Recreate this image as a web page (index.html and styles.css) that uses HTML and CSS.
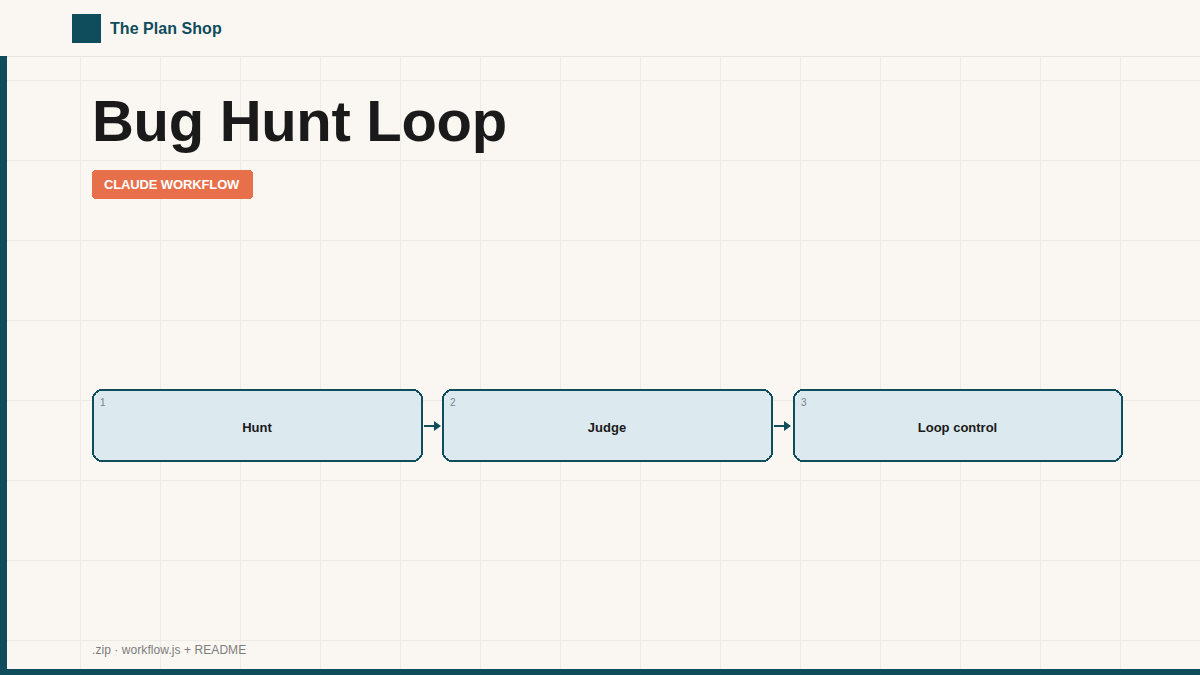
FILE: index.html
```html
<!DOCTYPE html>
<html lang="en">
<head>
<meta charset="utf-8">
<title>Bug Hunt Loop</title>
<link rel="stylesheet" href="styles.css">
</head>
<body>
<div class="slide">
  <header class="topbar">
    <div class="logo"></div>
    <div class="brand">The Plan Shop</div>
  </header>
  <div class="stage">
    <div class="rail"></div>
    <main class="content">
      <h1 class="title">Bug Hunt Loop</h1>
      <div class="tag"><svg class="shape"><rect/></svg><span class="tag-text">CLAUDE WORKFLOW</span></div>
      <div class="flow">
        <div class="step"><svg class="shape"><rect/></svg><span class="num">1</span><span class="name">Hunt</span></div>
        <svg class="arrow" width="20" height="12" viewBox="0 0 20 12"><path d="M1 6H12" stroke="#0f4c5c" stroke-width="2" fill="none"/><path d="M11 1L18 6L11 11Z" fill="#0f4c5c"/></svg>
        <div class="step"><svg class="shape"><rect/></svg><span class="num">2</span><span class="name">Judge</span></div>
        <svg class="arrow" width="20" height="12" viewBox="0 0 20 12"><path d="M1 6H12" stroke="#0f4c5c" stroke-width="2" fill="none"/><path d="M11 1L18 6L11 11Z" fill="#0f4c5c"/></svg>
        <div class="step"><svg class="shape"><rect/></svg><span class="num">3</span><span class="name">Loop control</span></div>
      </div>
      <div class="foot">.zip · workflow.js + README</div>
    </main>
  </div>
</div>
</body>
</html>
```
FILE: styles.css
```css
* { box-sizing: border-box; }
html, body { margin: 0; height: 100%; }
body {
  font-family: "Liberation Sans", Arial, sans-serif;
  background-color: #faf7f2;
}
.slide {
  width: 1200px;
  height: 675px;
  display: flex;
  flex-direction: column;
  overflow: hidden;
  background-color: #faf7f2;
  background-image:
    linear-gradient(#eeeae4 1px, transparent 1px),
    linear-gradient(90deg, #eeeae4 1px, transparent 1px);
  background-size: 80px 80px;
  border-bottom: 6px solid #0f4c5c;
}
.topbar {
  height: 56px;
  flex: none;
  display: flex;
  align-items: center;
  gap: 9px;
  padding: 0 0 0 72px;
  background: #faf7f2;
}
.logo { width: 29px; height: 29px; background: #0f4c5c; }
.brand { font-size: 16px; line-height: 30px; padding-top: 1px; letter-spacing: 0.05px; font-weight: 700; color: #0f4c5c; }
.stage {
  flex: 1;
  min-height: 0;
  display: flex;
}
.rail { flex: none; width: 7px; background: #0f4c5c; }
.content {
  flex: 1;
  min-width: 0;
  display: flex;
  flex-direction: column;
  align-items: flex-start;
  padding: 28px 77px 12px 85px;
  border-top: 1px solid #e8e4de;
}
.title {
  margin: 0;
  font-size: 58px;
  line-height: 72px;
  font-weight: 700;
  letter-spacing: -0.3px;
  color: #1a1a1a;
}
.shape {
  position: absolute;
  left: 0;
  top: 0;
  width: 100%;
  height: 100%;
  overflow: visible;
}
.shape rect { shape-rendering: crispEdges; }
.tag {
  position: relative;
  margin-top: 13px;
  width: 161px;
  height: 29px;
  padding: 0 0 1px 12px;
  display: flex;
  align-items: center;
  font-size: 13px;
  font-weight: 700;
  color: #fff;
}
.tag .shape rect {
  width: 100%;
  height: 100%;
  rx: 4px;
  fill: #e76f4a;
}
.tag-text { position: relative; letter-spacing: -0.13px; }
.flow {
  margin-top: 190px;
  width: 100%;
  display: grid;
  grid-template-columns: 331px 19px 331px 20px 330px;
  align-items: center;
}
.step {
  position: relative;
  height: 73px;
  display: flex;
  align-items: center;
  justify-content: center;
  padding: 3px 1px 0 0;
}
.step .shape rect {
  x: 1px;
  y: 1px;
  width: calc(100% - 2px);
  height: calc(100% - 2px);
  rx: 9px;
  fill: #dce9ee;
  stroke: #0f4c5c;
  stroke-width: 2px;
}
.num {
  position: absolute;
  left: 8px;
  top: 8px;
  font-size: 10px;
  color: #7a8288;
}
.name { position: relative; font-size: 13px; font-weight: 700; color: #1a1a1a; }
.arrow { justify-self: start; }
.foot {
  margin-top: auto;
  font-size: 12px;
  letter-spacing: 0.07px;
  color: #7d7d7d;
}
```
